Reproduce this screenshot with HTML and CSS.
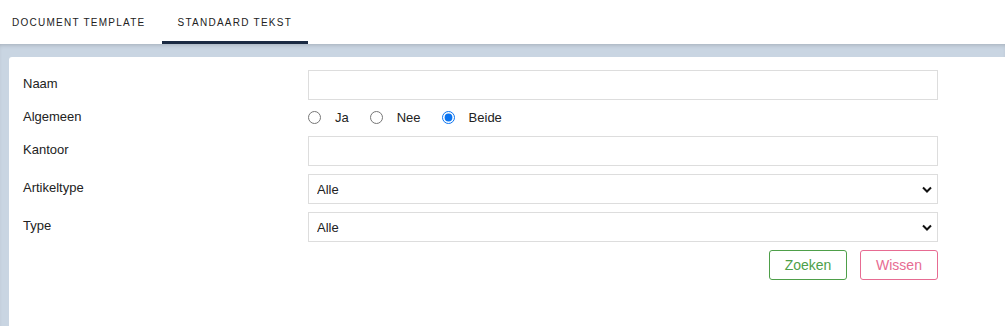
FILE: index.html
```html
<!DOCTYPE html>
<html lang="nl">
<head>
    <meta charset="UTF-8">
    <meta name="viewport" content="width=device-width, initial-scale=1.0">
    <title>Standaard tekst</title>
    <link rel="stylesheet" href="styles.css">
</head>
<body>
    <nav class="tabs">
        <a class="tab" href="#">Document template</a>
        <a class="tab active" href="#">Standaard tekst</a>
    </nav>
    <main class="page">
        <div class="card">
            <form class="search-form" onsubmit="event.preventDefault()">
                <label for="naam">Naam</label>
                <input type="text" id="naam">

                <label>Algemeen</label>
                <div class="radios">
                    <label class="radio"><input type="radio" name="algemeen" value="ja"> Ja</label>
                    <label class="radio"><input type="radio" name="algemeen" value="nee"> Nee</label>
                    <label class="radio"><input type="radio" name="algemeen" value="beide" checked> Beide</label>
                </div>

                <label for="kantoor">Kantoor</label>
                <input type="text" id="kantoor">

                <label for="artikeltype">Artikeltype</label>
                <select id="artikeltype">
                    <option>Alle</option>
                </select>

                <label for="type">Type</label>
                <select id="type">
                    <option>Alle</option>
                </select>

                <div class="buttons">
                    <button type="submit" class="btn btn-search">Zoeken</button>
                    <button type="reset" class="btn btn-clear">Wissen</button>
                </div>
            </form>
        </div>
    </main>
</body>
</html>
```

FILE: styles.css
```css
body {
    margin: 0;
    font-family: "Liberation Sans", Arial, sans-serif;
    color: #222;
    background-color: #fff;
    height: 326px;
    display: flex;
    flex-direction: column;
    overflow: hidden;
}
.tabs {
    display: flex;
    height: 44px;
    background-color: #fff;
}
.tab {
    display: flex;
    align-items: center;
    padding: 4px 16px 0;
    font-size: 10px;
    letter-spacing: 1.25px;
    text-transform: uppercase;
    color: #222;
    text-decoration: none;
    border-bottom: 3px solid transparent;
    box-sizing: border-box;
}
.tab:first-child {
    padding-left: 12px;
}
.tab.active {
    border-bottom-color: #1b2a42;
}
.page {
    flex: 1;
    background-color: #c9d5e2;
    box-shadow: inset 0 3px 4px -2px rgba(0, 0, 0, 0.18);
    padding: 13px 0 0 9px;
    display: flex;
}
.card {
    flex: 1;
    background-color: #fff;
    border-radius: 3px 0 0 0;
    padding: 13px 0 0 14px;
}
.search-form {
    display: grid;
    grid-template-columns: 285px 630px;
    row-gap: 8px;
    align-items: center;
    font-size: 13px;
}
.search-form > label {
    color: #222;
    padding-bottom: 3px;
}
input[type="text"], select {
    height: 30px;
    width: 100%;
    border: 1px solid #ddd;
    border-radius: 0;
    box-sizing: border-box;
    padding: 0 8px;
    font-family: inherit;
    font-size: 13px;
    color: #222;
    background-color: #fff;
    margin: 0;
}
select {
    appearance: none;
    background-image: url("data:image/svg+xml,%3Csvg xmlns='http://www.w3.org/2000/svg' width='10' height='7' viewBox='0 0 10 7'%3E%3Cpath d='M1 1.5l4 4 4-4' fill='none' stroke='%23111' stroke-width='2'/%3E%3C/svg%3E");
    background-repeat: no-repeat;
    background-position: right 5px center;
}
.radios {
    display: flex;
    align-items: center;
    height: 20px;
    padding-bottom: 2px;
    box-sizing: border-box;
}
.radio {
    display: flex;
    align-items: center;
    gap: 14px;
    margin-right: 21px;
}
.radio input {
    width: 13px;
    height: 13px;
    margin: 0;
    accent-color: #0b74f0;
}
.buttons {
    grid-column: 2;
    display: flex;
    justify-content: flex-end;
    gap: 13px;
}
.btn {
    width: 78px;
    height: 30px;
    background-color: #fff;
    border-radius: 3px;
    font-family: inherit;
    font-size: 14px;
    cursor: pointer;
}
.btn-search {
    border: 1px solid #4e9f49;
    color: #4e9f49;
}
.btn-clear {
    border: 1px solid #e76b92;
    color: #e76b92;
}
```
